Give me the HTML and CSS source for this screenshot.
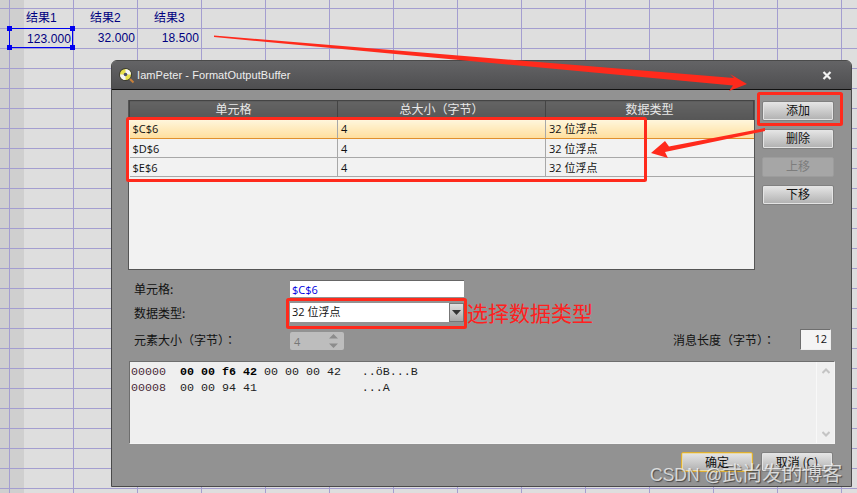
FILE: index.html
```html
<!DOCTYPE html>
<html lang="zh">
<head>
<meta charset="utf-8">
<title>FormatOutputBuffer</title>
<link rel="stylesheet" href="styles.css">
</head>
<body>
<div class="sheet">
  <div class="head-cell">结果1</div><div class="head-cell">结果2</div><div class="head-cell">结果3</div>
  <div class="val-cell selected">123.000<i class="h tl"></i><i class="h tr"></i><i class="h bl"></i><i class="h br"></i></div><div class="val-cell">32.000</div><div class="val-cell">18.500</div>
</div>

<section class="dialog">
  <header class="titlebar">
    <svg class="app-icon" width="18" height="18" viewBox="0 0 18 18"><circle cx="7.500" cy="7.500" r="6.500" fill="#3d3d30"/><circle cx="7.500" cy="7.500" r="5.500" fill="#e8e04a"/><path d="M7.500 2a5.500 5.500 0 0 1 5.500 5.500H7.500zM7.500 7.500V13A5.500 5.500 0 0 1 2 7.500z" fill="#f4f4f4"/><circle cx="7.500" cy="7.500" r="1.800" fill="#50506a"/><path d="M12 12l3.500 3.500" stroke="#c8803a" stroke-width="2"/></svg>
    <span class="title">IamPeter - FormatOutputBuffer</span>
    <svg class="close" width="10" height="9" viewBox="0 0 10 9"><path d="M1.500 1l7 7M8.500 1l-7 7" stroke="#f2f2f2" stroke-width="2.200"/></svg>
  </header>
  <div class="body">
    <div class="top">
      <div class="table-box">
        <table class="grid">
          <thead><tr><th>单元格</th><th>总大小（字节）</th><th>数据类型</th></tr></thead>
          <tbody>
            <tr class="sel"><td>$C$6</td><td>4</td><td>32 位浮点</td></tr>
            <tr><td>$D$6</td><td>4</td><td>32 位浮点</td></tr>
            <tr><td>$E$6</td><td>4</td><td>32 位浮点</td></tr>
          </tbody>
        </table>
      </div>
      <div class="side">
        <button class="btn">添加</button>
        <button class="btn">删除</button>
        <button class="btn off">上移</button>
        <button class="btn">下移</button>
      </div>
    </div>
    <div class="form">
      <div class="row r1"><label class="lbl">单元格:</label><div class="field link">$C$6</div></div>
      <div class="row r2"><label class="lbl">数据类型:</label><div class="combo"><span class="combo-text">32 位浮点</span><span class="combo-btn"><svg width="9" height="5" viewBox="0 0 9 5"><path d="M0 0h9L4.500 5z" fill="#333"/></svg></span></div></div>
      <div class="row r3">
        <label class="lbl">元素大小（字节）<span class="colon" lang="zh-TW">：</span></label>
        <div class="spin"><span>4</span><span class="arrows"><svg width="11" height="14" viewBox="0 0 11 14"><path d="M5.500 0l4.500 4.500H1zM5.500 14L10 9.500H1z" fill="#8c8c8c"/></svg></span></div>
        <span class="msg">消息长度（字节）<span class="colon" lang="zh-TW">：</span></span>
        <div class="num">12</div>
      </div>
    </div>
    <div class="hex">
      <pre class="hex-text"><span class="off-col">00000</span>  <b>00 00 f6 42</b> 00 00 00 42   ..öB...B
<span class="off-col">00008</span>  00 00 94 41               ...A</pre>
      <div class="scroll"><svg width="8" height="6" viewBox="0 0 8 6"><path d="M.5 5L4 1.500 7.500 5" fill="none" stroke="#c4c4c4" stroke-width="2"/></svg><svg width="8" height="6" viewBox="0 0 8 6"><path d="M.5 1L4 4.500 7.500 1" fill="none" stroke="#c4c4c4" stroke-width="2"/></svg></div>
    </div>
    <div class="footer">
      <button class="btn default">确定</button>
      <button class="btn">取消 (C)</button>
    </div>
  </div>
</section>

<svg class="marks" width="857" height="493" viewBox="0 0 857 493">
  <g fill="none" stroke="#ff2a1c" stroke-width="3">
    <rect x="758.500" y="93.500" width="83" height="31" rx="1"/>
    <rect x="127.500" y="118.500" width="518" height="62" rx="1"/>
    <rect x="287.500" y="299.500" width="178" height="28" rx="1"/>
  </g>
  <g fill="#ff2a1c">
    <polygon points="214,35.500 734,78 730,74 747,84 729,91 733,85.500 214,37"/>
    <polygon points="765,128 669,146.500 665,141 651,153 668,158 665,152 765,131"/>
  </g>
</svg>
<div class="note">选择数据类型</div>
<div class="watermark"><span class="wm-latin">CSDN @</span>武尚发的博客</div>
</body>
</html>
```

FILE: styles.css
```css
* { box-sizing: border-box; }
html, body { height: 100%; }
body {
  margin: 0;
  overflow: hidden;
  font-family: "Liberation Sans", "Noto Sans CJK SC", sans-serif;
  background-color: #dedede;
  background-image:
    linear-gradient(to right, #a49ed0 1px, transparent 1px),
    linear-gradient(to bottom, #a49ed0 1px, transparent 1px),
    linear-gradient(to right, #cfcfcf 24px, transparent 24px);
  background-size: 64px 20px, 64px 20px, 100% 100%;
  background-position: 9px 8px, 9px 8px, 0 0;
  background-repeat: repeat, repeat, no-repeat;
}

.sheet {
  display: grid;
  grid-template-columns: repeat(3, 64px);
  grid-auto-rows: 20px;
  padding: 8px 0 0 9px;
  width: 210px;
  font-size: 12px;
  color: #000080;
}
.head-cell { line-height: 20px; padding-left: 17px; }
.val-cell { position: relative; line-height: 21px; text-align: right; padding-right: 2px; letter-spacing: .1px; }
.selected { border: 1px solid #0000f0; height: 20px; width: 64px; line-height: 20px; padding-right: 1px; }
.h { position: absolute; width: 5px; height: 5px; background: #0000f0; }
.tl { left: -3px; top: -3px; }
.tr { right: -3px; top: -3px; }
.bl { left: -3px; bottom: -3px; }
.br { right: -3px; bottom: -3px; }

.dialog {
  position: absolute;
  left: 111px;
  top: 60px;
  width: 741px;
  height: 427px;
  border: 1px solid #4a4a4a;
  border-radius: 6px 6px 0 0;
  background: #929292;
  overflow: hidden;
  font-family: "Noto Sans CJK SC", sans-serif;
}
.titlebar {
  display: flex;
  align-items: center;
  height: 29px;
  padding: 0 19px 0 6px;
  background: linear-gradient(#646466, #4e4e50);
  border-bottom: 1px solid #111;
  color: #eeeeee;
  font-family: "Liberation Sans", sans-serif;
  font-size: 11px;
  letter-spacing: .07px;
}
.app-icon { flex: none; margin-right: 1px; margin-top: 1px; }
.title { flex: 1; }
.body { padding: 10px 17px 0 16px; }
.top { display: flex; gap: 7px; }
.table-box {
  width: 627px;
  height: 170px;
  background: #f2f2f2;
  border: 1px solid #555;
  border-top: 0;
}
.grid { width: 100%; border-collapse: collapse; table-layout: fixed; font-size: 11px; color: #111; }
.grid th {
  height: 19px;
  padding: 0;
  vertical-align: top;
  background: linear-gradient(#646464, #565656);
  border: 1px solid #444;
  border-bottom: 0;
  color: #e8e8e8;
  font-weight: 400;
  font-size: 12px;
  line-height: 16px;
}
.grid td {
  height: 19px;
  padding: 0 0 0 3px;
  border-bottom: 1px solid #a8a8a8;
  border-right: 1px solid #a8a8a8;
  line-height: 17px;
  font-family: "Open Sans", "Noto Sans CJK SC", sans-serif;
}
.grid td:last-child { border-right: 0; }
.grid .sel td { background: linear-gradient(#fff6dc, #ffdf9e); border-bottom-color: #e0902e; }

.side { display: flex; flex-direction: column; gap: 8px; padding-top: 1px; }
.side .btn { padding-bottom: 2px; }
.btn {
  width: 72px;
  height: 20px;
  padding: 0;
  border: 1px solid #808080;
  border-radius: 2px;
  background: linear-gradient(#e6e6e6, #b0b0b0);
  box-shadow: inset 0 0 0 1px #e4e4e4;
  color: #111;
  font-family: "Noto Sans CJK SC", sans-serif;
  font-size: 12px;
  line-height: 16px;
}
.btn.off { background: #a6a6a6; border-color: #9c9c9c; box-shadow: none; color: #7d7d7d; }
.btn.default { border-color: #e0b030; box-shadow: inset 0 0 0 1px #e8d9a8; }

.form { margin-top: 10px; font-size: 12px; color: #111; }
.row { display: flex; align-items: center; }
.lbl { flex: none; width: 162px; padding-left: 6px; line-height: 17px; }
.r1 { height: 17px; }
.r2 { height: 19px; margin-top: 6px; }
.r3 { height: 21px; margin-top: 7px; }
.r3 .lbl { white-space: nowrap; }
.colon { font-family: "Noto Sans CJK TC", sans-serif; }
.field {
  width: 174px;
  height: 17px;
  background: #fff;
  border-top: 1px solid #666;
  padding-left: 2px;
  font-size: 11px;
  line-height: 18px;
  font-family: "Open Sans", sans-serif;
}
.link { color: #0000e0; }
.combo { display: flex; width: 174px; height: 19px; background: #fff; font-size: 11px; }
.combo-text { flex: 1; padding-left: 2px; line-height: 18px; font-family: "Open Sans", "Noto Sans CJK SC", sans-serif; }
.combo-btn {
  display: flex;
  align-items: center;
  justify-content: center;
  width: 15px;
  background: linear-gradient(#e0e0e0, #a8a8a8);
  border: 1px solid #777;
}
.spin {
  display: flex;
  justify-content: space-between;
  align-items: center;
  width: 54px;
  height: 18px;
  margin-top: 3px;
  padding: 0 5px 0 4px;
  border-radius: 2px;
  background: #bdbdbd;
  color: #777;
  font-family: "Open Sans", sans-serif;
  font-size: 11px;
}
.arrows { display: flex; }
.msg { margin-left: 329px; width: 127px; white-space: nowrap; }
.num {
  width: 31px;
  height: 21px;
  padding: 1px 3px 0 0;
  background: #f4f4f4;
  border: 1px solid #666;
  border-color: #6e6e6e #eee #eee #6e6e6e;
  text-align: right;
  font-family: "Open Sans", sans-serif;
  font-size: 11px;
  line-height: 15px;
}

.hex {
  display: flex;
  width: 706px;
  height: 83px;
  margin: 11px 0 0 1px;
  background: #efefef;
  border-top: 1px solid #6e6e6e;
  border-left: 1px solid #6e6e6e;
  border-right: 1px solid #f4f4f4;
  border-bottom: 1px solid #f4f4f4;
}
.hex-text {
  flex: 1;
  margin: 0;
  padding: 2px 0 0 1px;
  font-family: "Liberation Mono", monospace;
  font-size: 11.67px;
  line-height: 16px;
  color: #222;
}
.hex-text b { color: #000; }
.off-col { color: #4a2a38; }
.scroll {
  display: flex;
  flex-direction: column;
  align-items: center;
  justify-content: space-between;
  width: 18px;
  padding: 6px 0 6px;
  border-left: 1px solid #f8f8f8;
}

.footer { display: flex; justify-content: flex-end; gap: 8px; margin-top: 8px; padding-right: 1px; }

.marks { position: absolute; left: 0; top: 0; pointer-events: none; }
.note {
  position: absolute;
  left: 467px;
  top: 298px;
  color: #ff2020;
  font-family: "Noto Sans CJK SC", sans-serif;
  font-size: 21px;
  line-height: 28px;
}
.watermark {
  position: absolute;
  left: 650px;
  top: 460px;
  color: rgba(255, 255, 255, 0.72);
  text-shadow: 1px 1px 1px rgba(40, 40, 40, 0.7);
  font-family: "Noto Sans CJK SC", sans-serif;
  font-size: 20px;
  line-height: 26px;
  white-space: nowrap;
}
.wm-latin { font-family: "Liberation Sans", sans-serif; font-size: 17.5px; }
```
